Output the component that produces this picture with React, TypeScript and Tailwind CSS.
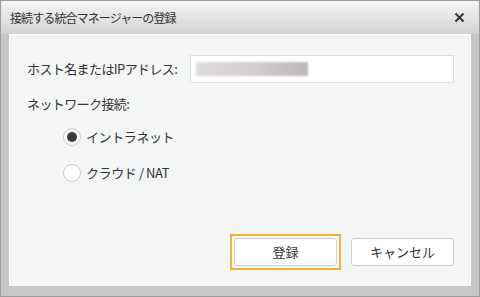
import React from 'react';

const font = { fontFamily: '"Noto Sans CJK JP", "Noto Sans", sans-serif' };

const Radio: React.FC<{ checked?: boolean; label: string }> = ({ checked, label }) => (
  <div className="flex items-center h-[20px]">
    <span className="w-[18px] h-[18px] rounded-full border border-[#c9c9c9] bg-white flex items-center justify-center">
      {checked && <span className="w-[10px] h-[10px] rounded-full bg-[#3a3a3a]" />}
    </span>
    <span className="ml-[5px] text-[13px] text-[#333] tracking-[-0.4px]">{label}</span>
  </div>
);

export default function App() {
  return (
    <div
      className="w-[480px] h-[297px] bg-[#c8c8c8] border border-[#9c9c9c] flex flex-col overflow-hidden"
      style={font}
    >
      {/* title bar */}
      <div className="h-[33px] shrink-0 flex items-center justify-between pl-[9px] pr-[12px] bg-gradient-to-b from-[#f6f6f6] to-[#d2d2d2]">
        <span className="text-[12px] text-[#333] tracking-[-0.9px]">接続する統合マネージャーの登録</span>
        <svg width="11" height="11" viewBox="0 0 11 11" className="mr-[2px]">
          <path d="M1.5 1.5 L9.5 9.5 M9.5 1.5 L1.5 9.5" stroke="#333" strokeWidth="2" />
        </svg>
      </div>

      <div className="flex-1 mx-[8px] mb-[10px] bg-[#f4f5f5] border border-[#fbfbfb] flex flex-col">
        <div className="flex items-center mt-[20px] pl-[17px]">
          <span className="text-[13px] text-[#333] w-[163px] tracking-[-0.6px]">ホスト名またはIPアドレス:</span>
          <div className="w-[264px] h-[28px] bg-white border border-[#dedede] flex items-center pl-[5px]">
            <span className="h-[14px] w-[112px] bg-gradient-to-r from-[#d8d2d8] via-[#c8c3c8] to-[#aaa5aa] opacity-80 blur-[1px]" />
          </div>
        </div>

        <div className="mt-[11px] pl-[17px] text-[13px] text-[#333] tracking-[-0.6px]">ネットワーク接続:</div>

        <div className="mt-[13px] pl-[53px] flex flex-col gap-[16px]">
          <Radio checked label="イントラネット" />
          <Radio label="クラウド / NAT" />
        </div>

        <div className="mt-auto mb-[15px] flex justify-end pr-[16px] gap-[10px] items-center">
          <div className="p-[2px] border-[2px] border-[#f5b335]">
            <button className="w-[103px] h-[28px] bg-white border border-[#cfcfcf] rounded-[3px] text-[13px] text-[#333]">
              登録
            </button>
          </div>
          <button className="w-[103px] h-[28px] bg-white border border-[#cfcfcf] rounded-[3px] text-[13px] text-[#333]">
            キャンセル
          </button>
        </div>
      </div>
    </div>
  );
}
